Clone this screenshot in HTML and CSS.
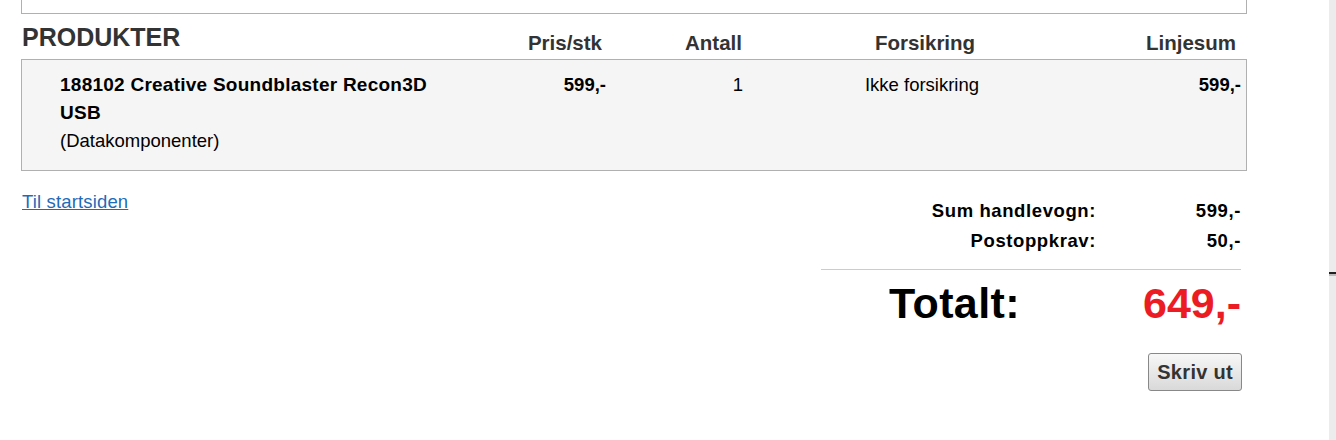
FILE: index.html
```html
<!DOCTYPE html>
<html lang="no">
<head>
    <meta charset="UTF-8">
    <title>Handlevogn</title>
    <link rel="stylesheet" href="styles.css">
</head>
<body>
    <div class="page">
        <div class="top-box"></div>

        <div class="cart-head">
            <h2>PRODUKTER</h2>
            <div class="col-right">Pris/stk</div>
            <div class="col-right">Antall</div>
            <div class="col-center">Forsikring</div>
            <div class="col-right">Linjesum</div>
        </div>

        <div class="cart-items">
            <div class="cart-row">
                <div class="product">
                    <strong>188102 Creative Soundblaster Recon3D USB</strong><br>
                    (Datakomponenter)
                </div>
                <div class="col-right"><strong>599,-</strong></div>
                <div class="col-right">1</div>
                <div class="col-center">Ikke forsikring</div>
                <div class="col-right"><strong>599,-</strong></div>
            </div>
        </div>

        <div class="cart-foot">
            <a href="#" class="back-link">Til startsiden</a>

            <div class="summary">
                <div class="sum-row">
                    <span>Sum handlevogn:</span>
                    <span>599,-</span>
                </div>
                <div class="sum-row">
                    <span>Postoppkrav:</span>
                    <span>50,-</span>
                </div>
                <div class="total-row">
                    <span class="total-label">Totalt:</span>
                    <span class="total-value">649,-</span>
                </div>
                <div class="actions">
                    <button type="button">Skriv ut</button>
                </div>
            </div>
        </div>
    </div>

    <div class="side-strip">
        <div class="strip-mark"></div>
    </div>
</body>
</html>
```

FILE: styles.css
```css
body {
    margin: 0;
    display: flex;
    font-family: "Liberation Sans", Arial, sans-serif;
    color: #000;
    background-color: #fff;
}

.page {
    flex: 1;
    padding-left: 21px;
}

.top-box {
    width: 1224px;
    height: 13px;
    border: 1px solid #b0b0b0;
    border-top: none;
}

.cart-head {
    width: 1214px;
    height: 45px;
    padding: 0 10px 0 1px;
    display: grid;
    grid-template-columns: 1fr 120px 140px 366px 128px;
    align-items: end;
    font-size: 20.5px;
    font-weight: bold;
    color: #333;
}

.cart-head h2 {
    margin: 0;
    padding-bottom: 8px;
    font-size: 25px;
    line-height: 28px;
}

.cart-head div {
    line-height: 24px;
    padding-bottom: 4px;
}

.col-right {
    text-align: right;
}

.col-center {
    text-align: center;
}

.cart-items {
    width: 1224px;
    border: 1px solid #b0b0b0;
    background-color: #f5f5f5;
}

.cart-row {
    padding: 11px 5px 15px 38px;
    display: grid;
    grid-template-columns: 1fr 120px 137px 358px 140px;
    font-size: 18.5px;
    line-height: 28px;
}

.product strong {
    display: inline-block;
    max-width: 400px;
    font-size: 19px;
    letter-spacing: 0.25px;
}

.cart-foot {
    width: 1220px;
    margin-top: 20px;
    display: flex;
    justify-content: space-between;
    align-items: flex-start;
}

.back-link {
    margin-left: 1px;
    font-size: 18.5px;
    line-height: 22px;
    letter-spacing: 0.15px;
    color: #1e6bb8;
}

.summary {
    width: 420px;
    margin-top: 5px;
    font-size: 18.5px;
    font-weight: bold;
}

.sum-row {
    display: grid;
    grid-template-columns: 275px 145px;
    line-height: 30px;
    text-align: right;
    letter-spacing: 0.6px;
}

.total-row {
    margin-top: 13px;
    padding-top: 8px;
    border-top: 1px solid #ccc;
    display: flex;
    justify-content: space-between;
    line-height: 50px;
    font-size: 43px;
}

.total-label {
    padding-left: 68px;
    letter-spacing: 0.4px;
}

.total-value {
    color: #ec1c24;
}

.actions {
    margin-top: 25px;
    margin-right: -1px;
    text-align: right;
}

button {
    height: 38px;
    padding: 0 8px;
    font-family: "Liberation Sans", Arial, sans-serif;
    font-size: 20px;
    font-weight: bold;
    letter-spacing: 0.3px;
    color: #333;
    background: linear-gradient(#f7f7f7, #d9d9d9);
    border: 1px solid #888;
    border-radius: 3px;
    cursor: pointer;
}

.side-strip {
    width: 7px;
    height: 100vh;
    background-color: #ececec;
}

.strip-mark {
    margin-top: 272px;
    height: 2px;
    background-color: #222;
    border-bottom: 2px solid #bbb;
}
```
